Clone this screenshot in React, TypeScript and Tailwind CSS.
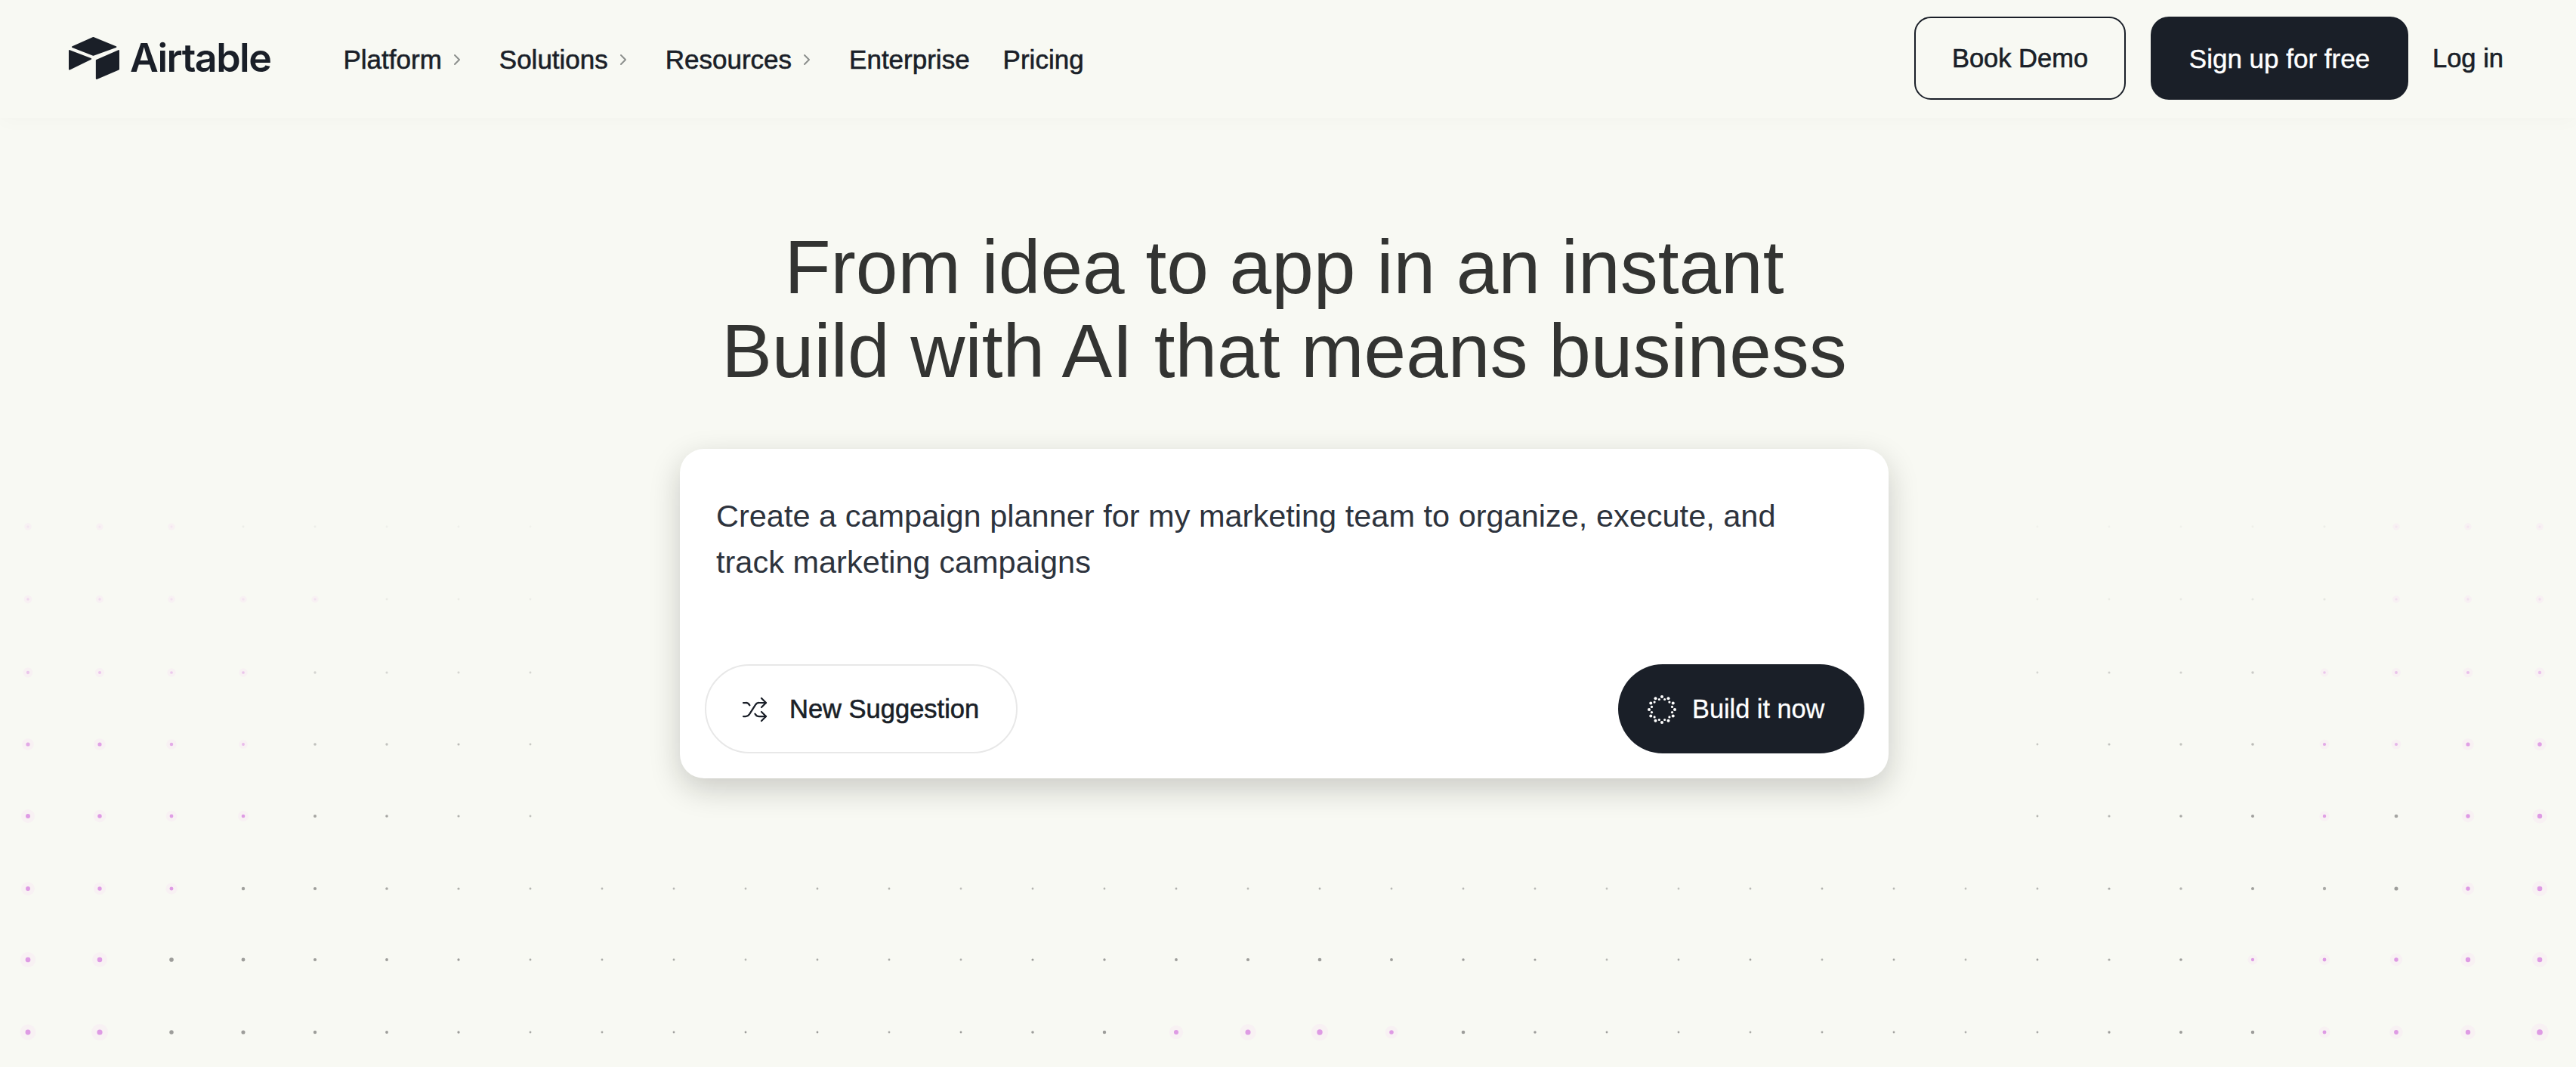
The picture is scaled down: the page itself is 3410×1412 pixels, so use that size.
import { ChevronRight, Shuffle } from 'lucide-react'

const NAV_ITEMS = [
  { label: 'Platform', hasMenu: true },
  { label: 'Solutions', hasMenu: true },
  { label: 'Resources', hasMenu: true },
  { label: 'Enterprise', hasMenu: false },
  { label: 'Pricing', hasMenu: false },
]

const ROWS = [1366, 1270, 1176, 1080, 985, 890, 793, 697]
const ROW_STRENGTH = [1, 0.9, 0.75, 0.7, 0.55, 0.35, 0.14, 0.08]
const COLUMNS = Array.from({ length: 36 }, (_, i) => 37 + 95 * i)

function wobble(a: number, b: number) {
  const v = Math.sin(a * 12.9898 + b * 78.233) * 43758.5453
  return v - Math.floor(v)
}

function DotField() {
  const dots = ROWS.flatMap((y, r) =>
    COLUMNS.map((x, c) => {
      const dist = Math.min(x, 3400 - x)
      const edge = Math.max(0, 1 - dist / 720)
      const mid = r < 2 ? Math.max(0, 1 - Math.abs(x - 1700) / 420) : 0
      if (r >= 3 && edge === 0) return null
      const strength = ROW_STRENGTH[r] * (0.55 + 0.45 * Math.max(edge, mid)) * (0.85 + 0.3 * wobble(c, r))
      const radius = 1.4 + 2.6 * strength * Math.max(edge, mid * (r === 0 ? 1 : 0.4))
      const midPink = r === 0 && Math.abs(x - 1700) < 190
      const edgePink = edge * (0.5 + 0.7 * wobble(r, c)) > 0.48 || (dist < 60 && r < 4)
      const isPink = midPink || edgePink
      const fill = isPink ? '#de9be4' : '#9d9d9a'
      return { x, y, radius, fill, opacity: Math.min(1, strength * 1.7), isPink, key: `${r}-${c}` }
    }),
  )

  return (
    <svg className="absolute inset-0" width="3410" height="1412" viewBox="0 0 3410 1412" aria-hidden="true">
      {dots.map((d) =>
        d ? (
          <g key={d.key}>
            {d.isPink && <circle cx={d.x} cy={d.y} r={d.radius * 3} fill="#f7def4" opacity={0.3} />}
            <circle cx={d.x} cy={d.y} r={d.radius} fill={d.fill} opacity={d.opacity} />
          </g>
        ) : null,
      )}
    </svg>
  )
}

function AirtableMark() {
  return (
    <svg width="67" height="56" viewBox="93 57 200 167" fill="#1a1f28" stroke="#1a1f28" strokeWidth="6" strokeLinejoin="round" aria-hidden="true">
      <path d="M108 96 L190 60 L279 96 L190 128 Z" />
      <path d="M96 111 L180 143 L96 184 Z" />
      <path d="M203 149 L290 111 L290 184 L203 221 Z" />
    </svg>
  )
}

function SparkRing() {
  const spots = Array.from({ length: 24 }, (_, i) => {
    const angle = (i / 24) * Math.PI * 2
    const radius = i % 2 === 0 ? 17 : 14
    return { cx: 20 + Math.cos(angle) * radius, cy: 20 + Math.sin(angle) * radius, r: i % 2 === 0 ? 2 : 1.6 }
  })
  return (
    <svg width="40" height="40" viewBox="0 0 40 40" fill="#ffffff" aria-hidden="true">
      {spots.map((s, i) => (
        <circle key={i} cx={s.cx} cy={s.cy} r={s.r} />
      ))}
    </svg>
  )
}

export default function App() {
  return (
    <div className="relative h-[1412px] w-[3410px] overflow-hidden bg-[#f8f9f3] font-['Liberation_Sans',sans-serif] text-[#1a1f28]">
      <DotField />

      <header className="relative flex h-[156px] items-center justify-between bg-[#f8f9f3] pb-[2px] pl-[91px] pr-[96px] shadow-[0_4px_24px_rgba(0,0,0,0.025)]">
        <div className="flex items-center">
          <div className="flex items-center gap-[14px]">
            <AirtableMark />
            <span className="font-['Inter',sans-serif] text-[52px] font-semibold leading-none tracking-[-1.5px]">Airtable</span>
          </div>
          <nav className="ml-[96px] mt-[3px] flex items-center gap-[44px]">
            {NAV_ITEMS.map((item) => (
              <a key={item.label} className="flex items-center gap-[8px] text-[35px] leading-none [-webkit-text-stroke:0.6px_#1a1f28]">
                {item.label}
                {item.hasMenu && <ChevronRight className="text-[#8c8f8c]" size={24} strokeWidth={2} />}
              </a>
            ))}
          </nav>
        </div>
        <div className="flex items-center">
          <button type="button" className="flex h-[110px] w-[280px] items-center justify-center rounded-[22px] border-2 border-[#1a1f28] pt-[2px] text-[34.5px] [-webkit-text-stroke:0.6px_#1a1f28]">
            Book Demo
          </button>
          <button type="button" className="ml-[33px] flex h-[110px] w-[341px] items-center justify-center rounded-[24px] bg-[#1a1f28] pt-[2px] text-[35px] text-white [-webkit-text-stroke:0.4px_#ffffff]">
            Sign up for free
          </button>
          <a className="ml-[32px] pt-[2px] text-[34.5px] [-webkit-text-stroke:0.6px_#1a1f28]">Log in</a>
        </div>
      </header>

      <main className="relative flex flex-col items-center pr-[10px] pt-[32px]">
        <h1 className="mt-[110px] text-center text-[100px] font-normal leading-[111px] text-[#333432]">
          From idea to app in an instant
          <br />
          Build with AI that means business
        </h1>

        <section className="mt-[74px] flex h-[436px] w-[1600px] flex-col justify-between rounded-[32px] bg-white pb-[33px] pl-[33px] pr-[32px] pt-[58px] shadow-[0_14px_40px_rgba(20,22,15,0.2)]">
          <p className="pl-[15px] text-[41.5px] leading-[61px] text-[#2d333d]">
            Create a campaign planner for my marketing team to organize, execute, and
            <br />
            track marketing campaigns
          </p>
          <div className="flex items-center justify-between">
            <button type="button" className="flex h-[118px] w-[414px] items-center gap-[28px] rounded-full border-2 border-[#e8e8e8] pl-[46px] pt-[2px] text-[34.5px] [-webkit-text-stroke:0.6px_#1a1f28]">
              <Shuffle size={36} strokeWidth={1.5} className="[-webkit-text-stroke:0]" />
              New Suggestion
            </button>
            <button type="button" className="flex h-[118px] w-[326px] items-center gap-[20px] rounded-full bg-[#1a1f28] pl-[38px] pt-[2px] text-[34.3px] text-white [-webkit-text-stroke:0.3px_#ffffff]">
              <SparkRing />
              Build it now
            </button>
          </div>
        </section>
      </main>
    </div>
  )
}
